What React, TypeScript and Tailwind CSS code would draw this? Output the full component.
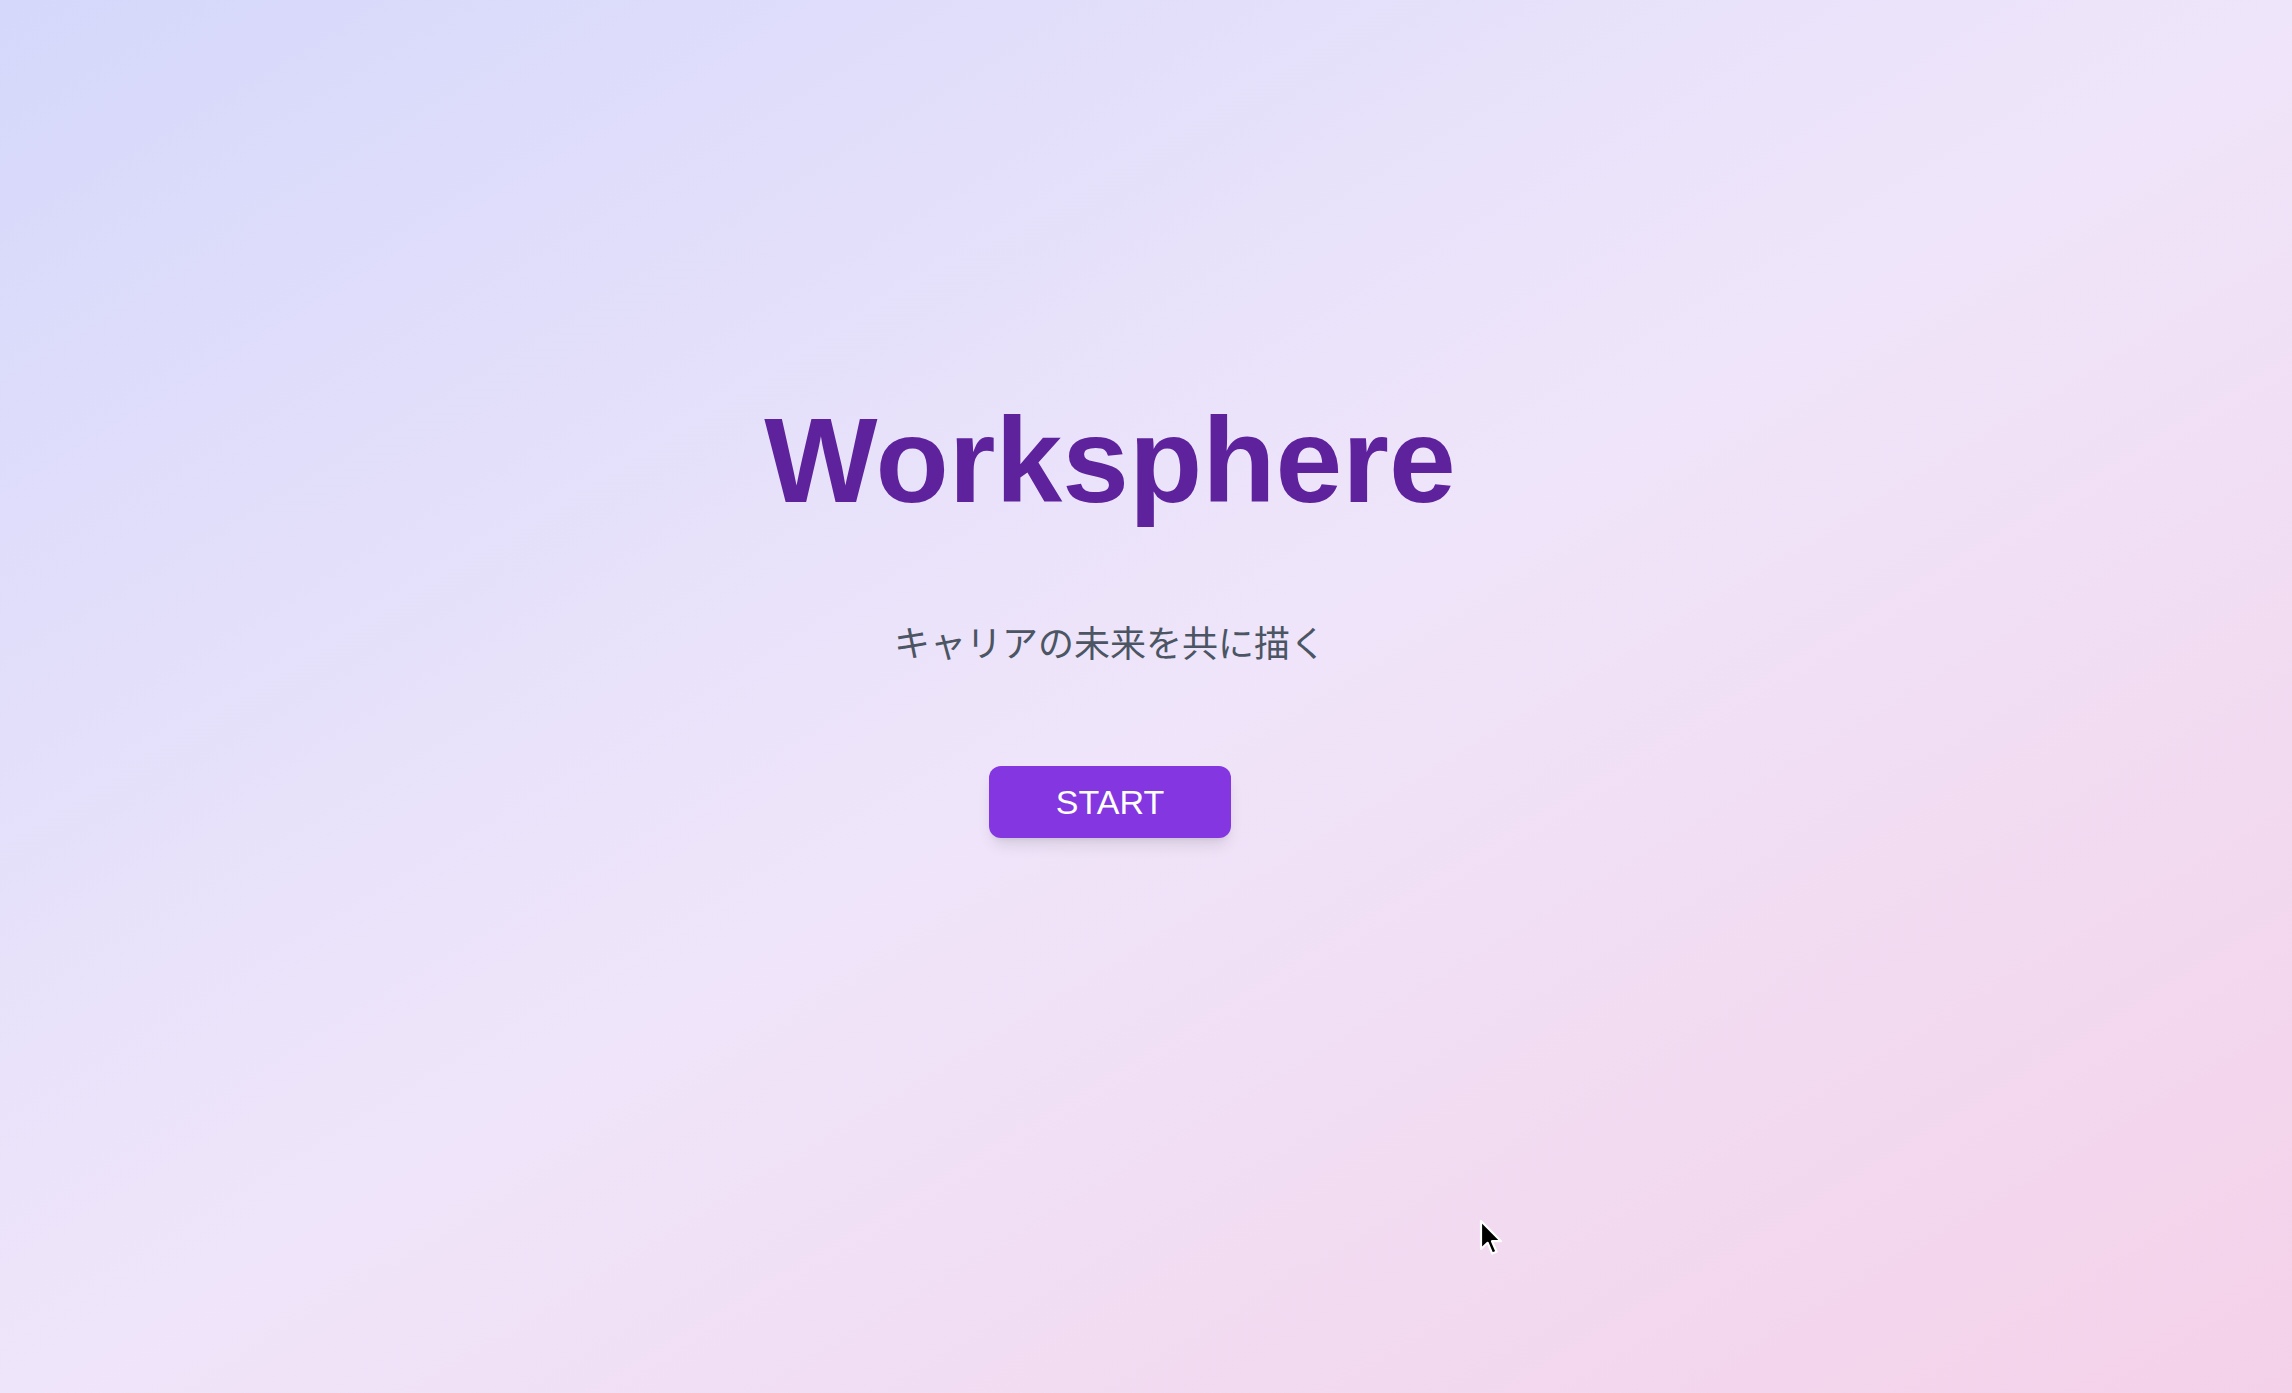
import React from 'react';

function Cursor() {
  return (
    <svg
      className="absolute left-[1479px] top-[1219px] pointer-events-none"
      width="26"
      height="38"
      viewBox="0 0 13 19"
    >
      <path
        d="M1 1 L1 15 L4.3 11.9 L6.6 17.3 L8.8 16.4 L6.5 11.1 L11 11.1 Z"
        fill="#000"
        stroke="#fff"
        strokeWidth="1.1"
        strokeLinejoin="round"
      />
    </svg>
  );
}

export default function App() {
  return (
    <div className="relative min-h-screen w-full overflow-hidden bg-gradient-to-br from-[#d5d8fb] via-[#efe5fa] to-[#f4d1e9]">
      <div className="flex flex-col items-center pt-[400px] pr-[72px]">
        <h1 className="text-[120px] leading-none font-bold text-[#5e229d] font-['Liberation_Sans',Arial,sans-serif]">
          Worksphere
        </h1>
        <p className="mt-[94px] text-[36px] leading-[54px] text-[#4b5563] font-['Noto_Sans_CJK_JP','Liberation_Sans',sans-serif]">
          キャリアの未来を共に描く
        </p>
        <button className="mt-[98px] h-[72px] w-[242px] rounded-xl bg-[#8437e0] text-white text-[34px] shadow-lg font-['Liberation_Sans',Arial,sans-serif]">
          START
        </button>
      </div>
      <Cursor />
    </div>
  );
}
